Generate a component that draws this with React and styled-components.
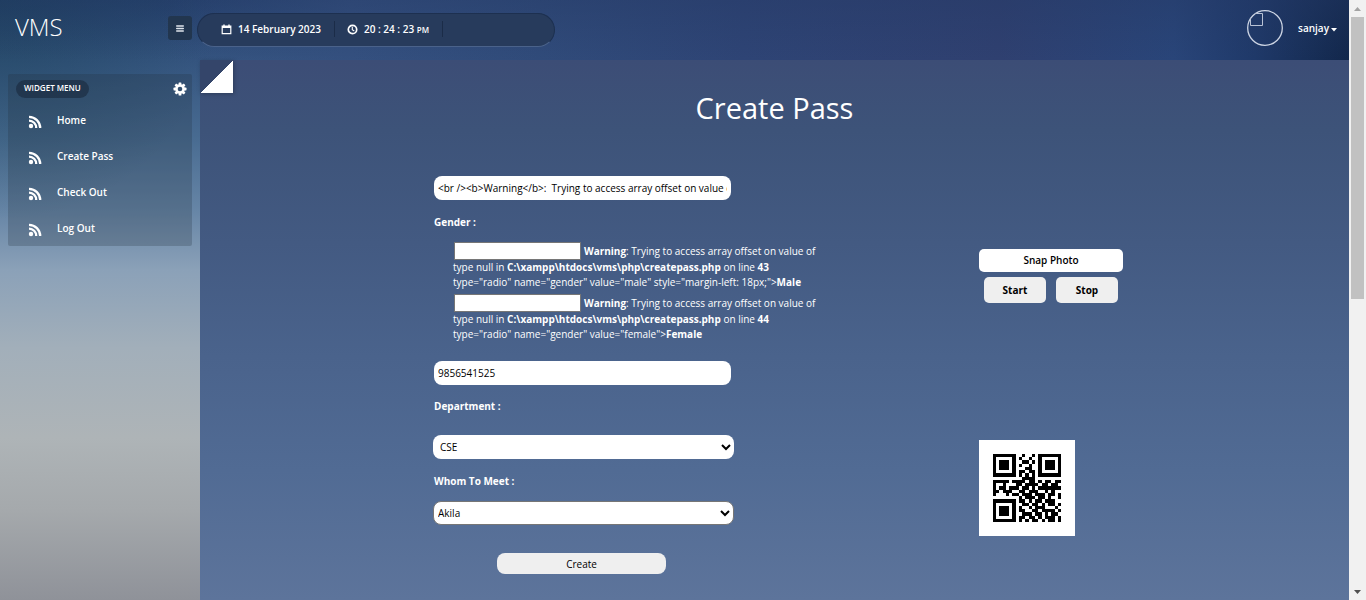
import React from "react";
import styled, { createGlobalStyle } from "styled-components";

const GlobalStyle = createGlobalStyle`
  * { box-sizing: border-box; }
  body {
    margin: 0;
    font-family: "Open Sans", "Noto Sans", sans-serif;
    font-size: 10px;
    line-height: 15px;
    color: #fff;
  }
  button, input, select { font: inherit; color: #000; margin: 0; }
`;

const Page = styled.div`
  display: grid;
  grid-template-columns: 1fr 17px;
  min-height: 100vh;
`;

const Backdrop = styled.div`
  display: grid;
  grid-template-columns: 200px 1fr;
  grid-template-rows: 60px 1fr;
  background: radial-gradient(circle at 0 0, rgba(20, 60, 75, 0.45), transparent 220px),
    linear-gradient(180deg, #264470 0%, #355580 10%, #486b91 23%, #6685a6 35%, #8ba1b8 45%, #a2afba 58%, #aeb4b7 73%, #a5a9ac 85%, #8f9299 100%);
`;

const Header = styled.header`
  grid-column: 1 / -1;
  display: flex;
  align-items: center;
  background: linear-gradient(180deg, rgba(36, 56, 100, 0.4), transparent),
    linear-gradient(90deg, transparent 0, transparent 12%, #34507f 26%, #304b7a 40%, #2e4475 55%, #2f4070 74%, #294579 87%, #1f3969 93%, #12274b 100%);
`;

const Logo = styled.a`
  width: 168px;
  padding: 0 0 6px 15px;
  color: #fff;
  font-size: 24px;
  line-height: 32px;
  font-weight: 300;
  text-decoration: none;
`;

const MenuToggle = styled.button`
  display: grid;
  place-items: center;
  width: 24px;
  height: 24px;
  margin-bottom: 4px;
  padding: 0;
  border: 0;
  border-radius: 3px;
  background: #22364f;
`;

const StatusBar = styled.div`
  display: flex;
  align-items: center;
  width: 358px;
  height: 34px;
  margin-left: 5px;
  padding: 0 0 2px 23px;
  border: 1px solid #1d3050;
  border-bottom-color: #4a628a;
  border-radius: 17px;
  background: #273b5c;
  font-weight: 600;
`;

const StatusItem = styled.div`
  display: flex;
  align-items: center;
  gap: 6px;
  height: 16px;
  padding-right: 13px;
  margin-right: 12px;
  border-right: 1px solid #1b2c48;
  white-space: pre;
  small { font-size: 8px; }
`;

const Account = styled.div`
  display: flex;
  align-items: center;
  gap: 15px;
  margin: 0 12px 4px auto;
`;

const AccountButton = styled.button`
  display: flex;
  align-items: center;
  gap: 2px;
  padding: 0;
  border: 0;
  background: none;
  color: #fff;
  font-weight: 600;
  svg { margin-top: 3px; }
`;

const Sidebar = styled.aside`
  padding: 14px 8px;
`;

const Widget = styled.nav`
  padding: 6px 5px 0 8px;
  border-radius: 2px;
  background: rgba(35, 45, 60, 0.24);
`;

const WidgetHead = styled.div`
  display: flex;
  align-items: center;
  justify-content: space-between;
`;

const WidgetTitle = styled.h2`
  margin: 0;
  padding: 0 8px 3px;
  border-radius: 9px;
  background: rgba(25, 40, 60, 0.6);
  font-size: 8px;
  line-height: 15px;
  font-weight: 600;
`;

const MenuList = styled.ul`
  margin: 0;
  padding: 4px 0 0 12px;
  list-style: none;
`;

const MenuLink = styled.a`
  display: flex;
  align-items: center;
  gap: 15px;
  height: 36px;
  color: #fff;
  font-weight: 600;
  text-decoration: none;
  svg { margin-top: 3px; }
`;

const Main = styled.main`
  background: linear-gradient(180deg, #3c4d76 0%, #3d5379 13%, #435a82 34%, #4a638c 55%, #516b94 76%, #5d749b 100%);
`;

const Fold = styled.div`
  width: 33px;
  height: 33px;
  margin-bottom: -5px;
  background: linear-gradient(135deg, #34456a 50%, #fff 51%);
  box-shadow: 1px 1px 4px rgba(0, 0, 0, 0.25);
`;

const Title = styled.h1`
  margin: 0 0 48px;
  font-size: 29px;
  line-height: 40px;
  font-weight: 400;
  text-align: center;
`;

const Columns = styled.div`
  display: flex;
  justify-content: space-between;
  padding: 0 226px 26px 233px;
`;

const Form = styled.form`
  display: flex;
  flex-direction: column;
  align-items: flex-start;
  width: 392px;
`;

const TextField = styled.input`
  width: 297px;
  height: 24px;
  margin-left: 1px;
  padding: 1px 4px;
  border: 0;
  border-radius: 8px;
  background: #fff;
`;

const Label = styled.label`
  padding-left: 1px;
  margin: ${(p) => p.$margin};
  font-weight: 700;
`;

const Group = styled.fieldset`
  margin: 15px 0;
  padding: 0;
  border: 0;
  legend { padding: 0 0 12px 1px; font-weight: 700; }
`;

const Choice = styled.div`
  margin-left: 20px;
  height: 52px;
  white-space: nowrap;
`;

const ChoiceInput = styled.input`
  width: 127px;
  height: 18px;
  margin: 0 3px 0 1px;
  padding: 0 2px;
  border: 1px solid #767676;
  background: #fff;
  vertical-align: top;
`;

const ChoiceLine = styled.div`
  height: 18px;
  line-height: 18px;
`;

const Select = styled.select`
  width: 301px;
  height: 24px;
  padding-left: ${(p) => (p.$outlined ? 0 : 3)}px;
  border: ${(p) => (p.$outlined ? "1px solid #767676" : "0")};
  border-radius: 8px;
  background-color: #fff;
`;

const SubmitButton = styled.button`
  width: 169px;
  height: 21px;
  margin: 28px 0 0 64px;
  padding: 1px 6px 0;
  border: 0;
  border-radius: 8px;
  background: #efefef;
`;

const Capture = styled.section`
  width: 144px;
  padding-top: 73px;
`;

const CameraButtons = styled.div`
  display: flex;
  justify-content: center;
  flex-wrap: wrap;
  gap: 5px 10px;
  margin-bottom: 137px;
`;

const CameraButton = styled.button`
  width: ${(p) => (p.$wide ? "100%" : "62px")};
  height: ${(p) => (p.$wide ? 23 : 26)}px;
  padding: 0;
  border: 0;
  border-radius: 5px;
  background: ${(p) => (p.$wide ? "#fff" : "#efefef")};
  font-weight: ${(p) => (p.$wide ? 600 : 700)};
`;

const QrFrame = styled.div`
  width: 96px;
  height: 96px;
  padding: 14px;
  background: #fff;
  svg { display: block; }
`;

const ScrollTrack = styled.div`
  display: flex;
  flex-direction: column;
  align-items: center;
  background: #f1f1f1;
`;

const ScrollThumb = styled.div`
  width: 13px;
  height: 47%;
  margin-bottom: auto;
  background: #c1c1c1;
`;

const qrRows = [
  "111111100100101111111",
  "100000101001001000001",
  "101110100110101011101",
  "101110101001001011101",
  "101110100011001011101",
  "100000101101101000001",
  "111111101010101111111",
  "000000000111100000000",
  "111110111101101011011",
  "100100011011110110110",
  "101101110110101111111",
  "110111001101110010100",
  "100010110111011101101",
  "000000001011101101001",
  "111111101101011011100",
  "100000100110110101101",
  "101110101001011100010",
  "101110101100110111101",
  "101110100111011010110",
  "100000101101101011101",
  "111111101010110101101",
];

const qrPath = qrRows
  .flatMap((row, y) => [...row].map((bit, x) => (bit === "1" ? `M${x} ${y}h1v1h-1z` : "")))
  .join("");

const QrCode = () => (
  <svg width="68" height="68" viewBox="0 0 21 21" role="img" aria-label="Pass QR code" shapeRendering="crispEdges">
    <path d={qrPath} fill="#000" />
  </svg>
);

const FeedIcon = () => (
  <svg width="14" height="14" viewBox="0 0 14 14" fill="none" stroke="#fff" strokeWidth="2.3" aria-hidden="true">
    <circle cx="3" cy="11" r="2.2" fill="#fff" stroke="none" />
    <path d="M1 5.6A7.2 7.2 0 0 1 8.2 13M1 1.8A11.2 11.2 0 0 1 12.2 13" />
  </svg>
);

const GearIcon = () => (
  <svg width="14" height="14" viewBox="0 0 14 14" aria-hidden="true">
    <g fill="#fff">
      {[0, 45, 90, 135].map((a) => (
        <rect key={a} x="5.6" y="0.5" width="2.8" height="13" rx="0.6" transform={`rotate(${a} 7 7)`} />
      ))}
      <circle cx="7" cy="7" r="4.8" />
    </g>
    <circle cx="7" cy="7" r="2.3" fill="#34506f" />
  </svg>
);

const CalendarIcon = () => (
  <svg width="11" height="11" viewBox="0 0 11 11" fill="none" stroke="#fff" aria-hidden="true">
    <path d="M1.2 2.2h8.6v7.4H1.2z" strokeWidth="1.2" />
    <path d="M1 3h9" strokeWidth="2" />
    <path d="M3 0.5v2M8 0.5v2" strokeWidth="1.4" />
  </svg>
);

const ClockIcon = () => (
  <svg width="11" height="11" viewBox="0 0 11 11" fill="none" stroke="#fff" aria-hidden="true">
    <circle cx="5.5" cy="5.5" r="4.2" strokeWidth="1.7" />
    <path d="M5.3 2.8v3l2 1.2" strokeWidth="1.1" />
  </svg>
);

const BarsIcon = () => (
  <svg width="8" height="7" viewBox="0 0 8 7" stroke="#dfe5ec" strokeLinecap="round" aria-hidden="true">
    <path d="M0.7 1h6.6M0.7 3.5h6.6M0.7 6h6.6" strokeWidth="1.4" />
  </svg>
);

const Avatar = () => (
  <svg width="36" height="36" viewBox="0 0 36 36" fill="none" role="img" aria-label="Profile picture">
    <circle cx="18" cy="18" r="17.3" stroke="#ccd4e3" strokeWidth="1.3" />
    <path d="M3.5 8V15.5H15.5V3.5H8" stroke="#b8c2d5" />
  </svg>
);

const Triangle = ({ up }) => (
  <svg width="17" height="17" viewBox="0 0 17 17" fill={up ? "#a3a3a3" : "#505050"} aria-hidden="true">
    <path d={up ? "M5 11h7L8.5 7z" : "M5 7h7l-3.5 4z"} />
  </svg>
);

const menu = ["Home", "Create Pass", "Check Out", "Log Out"];

const Warning = ({ line, id, rest, value }) => (
  <Choice>
    <ChoiceLine>
      <ChoiceInput id={id} aria-label={value} />
      <b>Warning</b>: Trying to access array offset on value of
    </ChoiceLine>
    type null in <b>C:\xampp\htdocs\vms\php\createpass.php</b> on line <b>{line}</b>
    <br />
    {rest}
    <b><label htmlFor={id}>{value}</label></b>
  </Choice>
);

export default function App() {
  return (
    <>
      <GlobalStyle />
      <Page>
        <Backdrop>
          <Header>
            <Logo href="#">VMS</Logo>
            <MenuToggle aria-label="Toggle menu"><BarsIcon /></MenuToggle>
            <StatusBar>
              <StatusItem><CalendarIcon />14 February 2023</StatusItem>
              <StatusItem><ClockIcon /><span>20 : 24 : 23 <small>PM</small></span></StatusItem>
            </StatusBar>
            <Account>
              <Avatar />
              <AccountButton>
                sanjay
                <svg width="6" height="4" viewBox="0 0 6 4" fill="#fff" aria-hidden="true"><path d="M0 0h6L3 3.5z" /></svg>
              </AccountButton>
            </Account>
          </Header>
          <Sidebar>
            <Widget>
              <WidgetHead>
                <WidgetTitle>WIDGET MENU</WidgetTitle>
                <GearIcon />
              </WidgetHead>
              <MenuList>
                {menu.map((item) => (
                  <li key={item}><MenuLink href="#"><FeedIcon />{item}</MenuLink></li>
                ))}
              </MenuList>
            </Widget>
          </Sidebar>
          <Main>
            <Fold />
            <Title>Create Pass</Title>
            <Columns>
              <Form>
                <TextField aria-label="Name" defaultValue="<br /><b>Warning</b>:  Trying to access array offset on value of type null" />
                <Group>
                  <legend>Gender :</legend>
                  <Warning id="male" line="43" value="Male" rest={'type="radio" name="gender" value="male" style="margin-left: 18px;">'} />
                  <Warning id="female" line="44" value="Female" rest={'type="radio" name="gender" value="female">'} />
                </Group>
                <TextField aria-label="Phone" defaultValue="9856541525" />
                <Label htmlFor="department" $margin="14px 0 21px">Department :</Label>
                <Select id="department"><option>CSE</option></Select>
                <Label htmlFor="host" $margin="15px 0 12px">Whom To Meet :</Label>
                <Select id="host" $outlined><option>Akila</option></Select>
                <SubmitButton type="button">Create</SubmitButton>
              </Form>
              <Capture>
                <CameraButtons>
                  <CameraButton $wide>Snap Photo</CameraButton>
                  <CameraButton>Start</CameraButton>
                  <CameraButton>Stop</CameraButton>
                </CameraButtons>
                <QrFrame><QrCode /></QrFrame>
              </Capture>
            </Columns>
          </Main>
        </Backdrop>
        <ScrollTrack>
          <Triangle up />
          <ScrollThumb />
          <Triangle />
        </ScrollTrack>
      </Page>
    </>
  );
}
